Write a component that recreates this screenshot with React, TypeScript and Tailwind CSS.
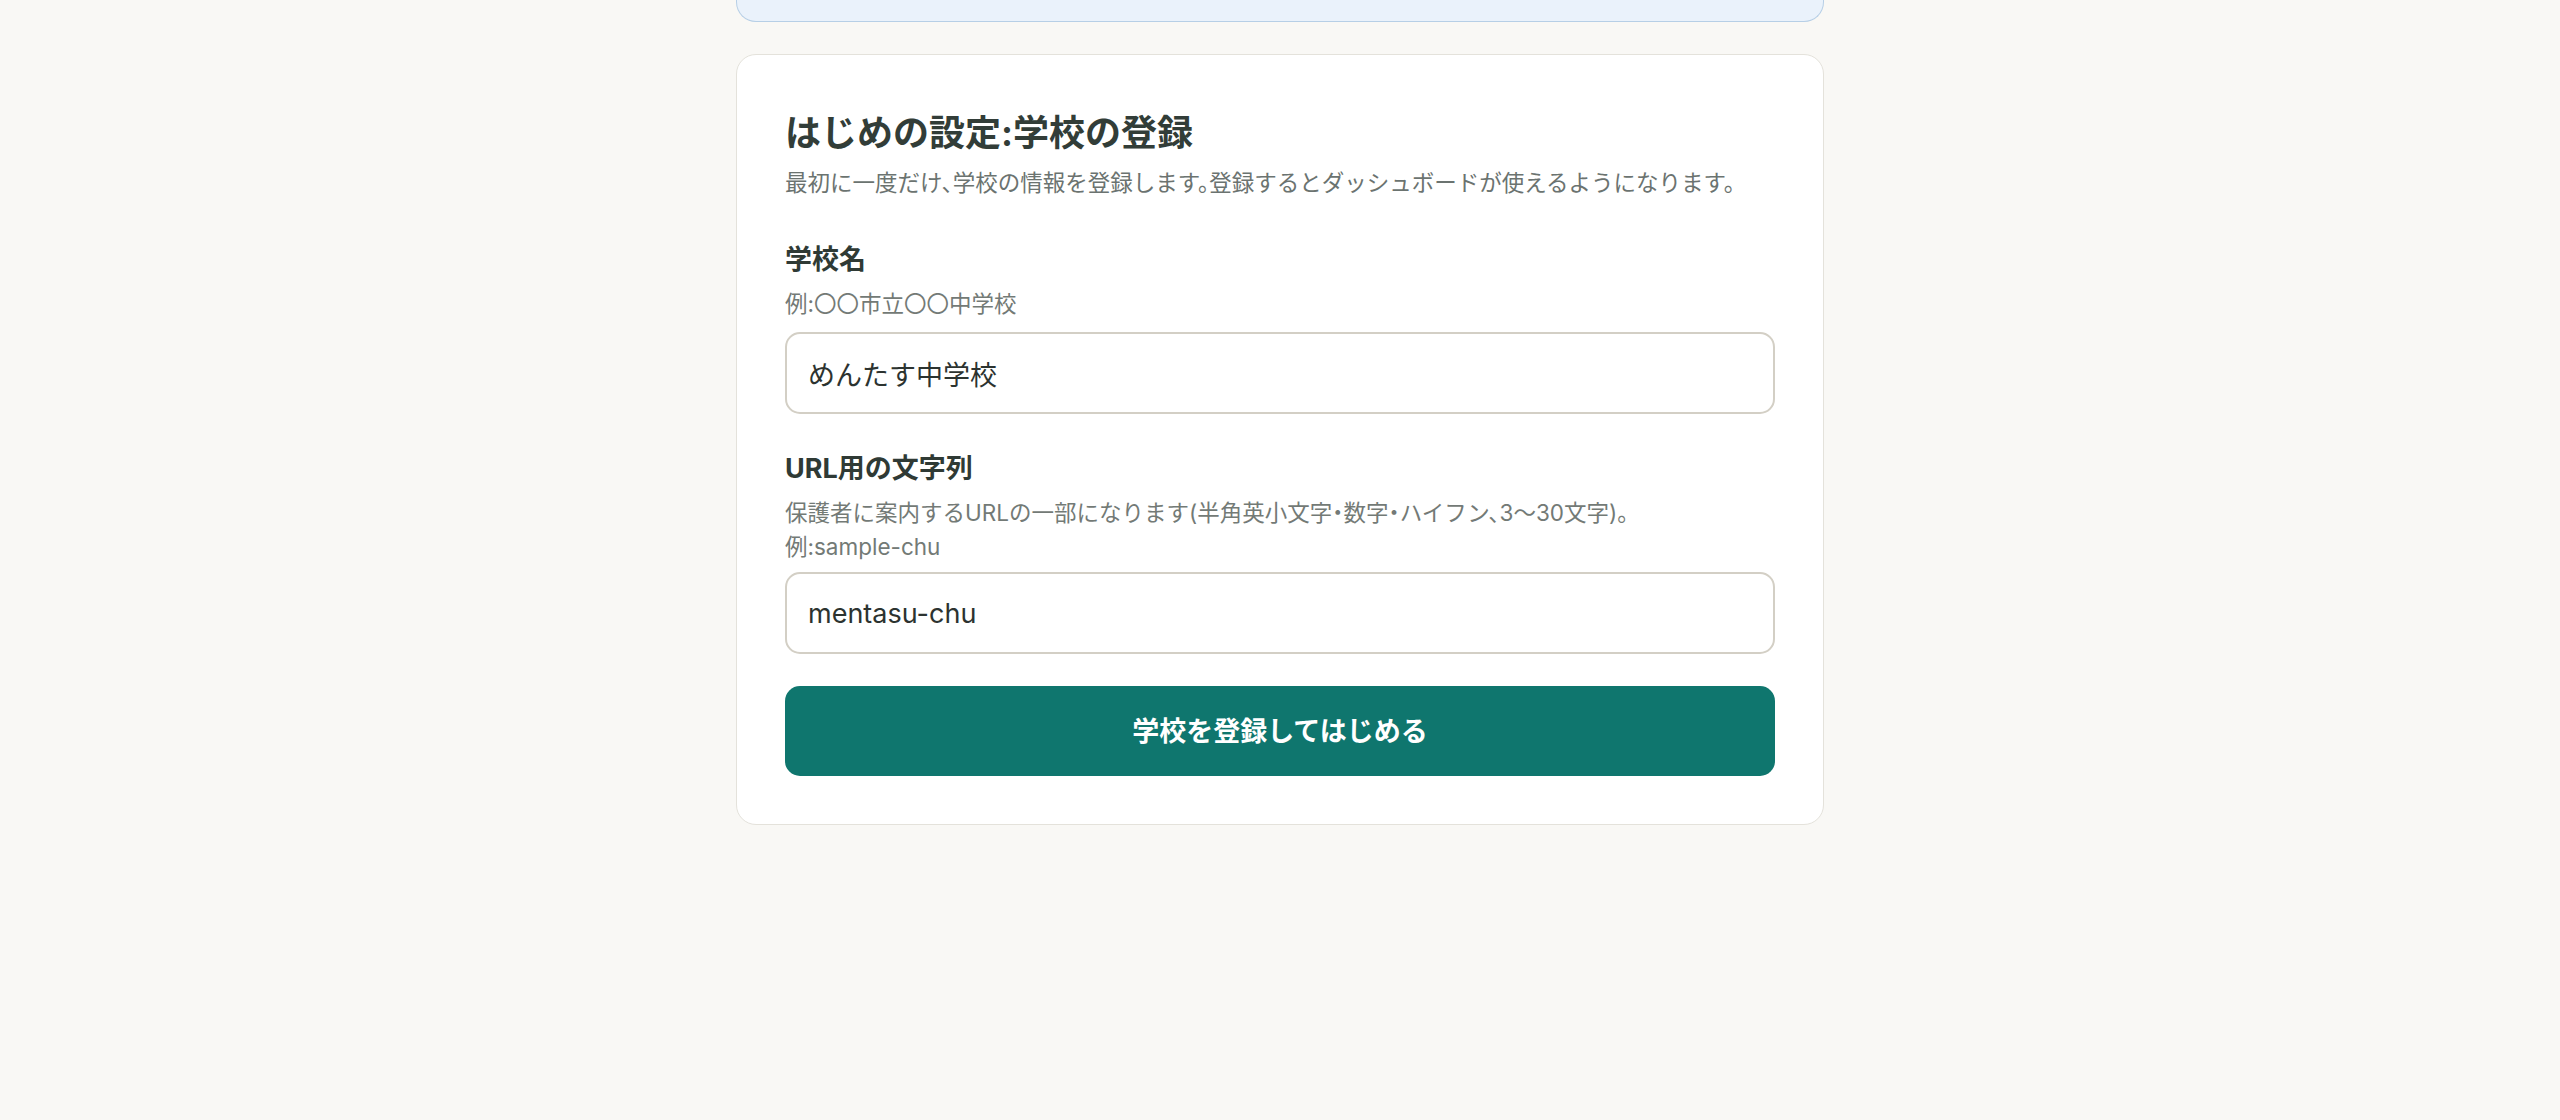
const sans = "font-['Inter','Noto_Sans_CJK_JP',sans-serif]";

function Field({
  label,
  hints,
  value,
  inputGap,
}: {
  label: string;
  hints: string[];
  value: string;
  inputGap: string;
}) {
  return (
    <div className="flex flex-col">
      <label className="text-[27px] leading-[40px] font-bold text-[#2f3a35]">{label}</label>
      <div className="mt-[7px] text-[22.5px] leading-[34px] text-[#737a76] [font-feature-settings:'halt']">
        {hints.map((h) => (
          <div key={h}>{h}</div>
        ))}
      </div>
      <input
        readOnly
        value={value}
        className={`${inputGap} h-[82px] w-full rounded-[15px] border-2 border-[#d3cfc5] bg-white px-[21px] text-[27px] text-[#2c3330] outline-none ${sans}`}
      />
    </div>
  );
}

export default function App() {
  return (
    <div className={`min-h-screen bg-[#f9f8f5] ${sans}`}>
      <div className="mx-auto flex w-[1088px] flex-col gap-8">
        {/* tail of the panel above */}
        <div className="h-[22px] rounded-b-[20px] border-[1.5px] border-t-0 border-[#b7cfe6] bg-[#eaf2fb]" />

        {/* setup card */}
        <div className="flex flex-col rounded-[20px] border-[1.5px] border-[#e4e2db] bg-white px-12 pt-[51px] pb-12">
          <h1 className="text-[36px] leading-[54px] font-bold text-[#323d38]">はじめの設定:学校の登録</h1>
          <p className="mt-[6px] text-[22.5px] leading-[34px] text-[#6b7370] [font-feature-settings:'halt']">
            最初に一度だけ、学校の情報を登録します。登録するとダッシュボードが使えるようになります。
          </p>

          <div className="mt-[40px]">
            <Field label="学校名" hints={["例:〇〇市立〇〇中学校"]} value="めんたす中学校" inputGap="mt-[11px]" />
          </div>

          <div className="mt-[35px]">
            <Field
              label="URL用の文字列"
              hints={[
                "保護者に案内するURLの一部になります(半角英小文字・数字・ハイフン、3〜30文字)。",
                "例:sample-chu",
              ]}
              value="mentasu-chu"
              inputGap="mt-[8px]"
            />
          </div>

          <button className="mt-[32px] flex h-[90px] items-center justify-center rounded-[15px] bg-[#0f766e] pt-[3px] text-[27px] font-bold text-white">
            学校を登録してはじめる
          </button>
        </div>
      </div>
    </div>
  );
}
